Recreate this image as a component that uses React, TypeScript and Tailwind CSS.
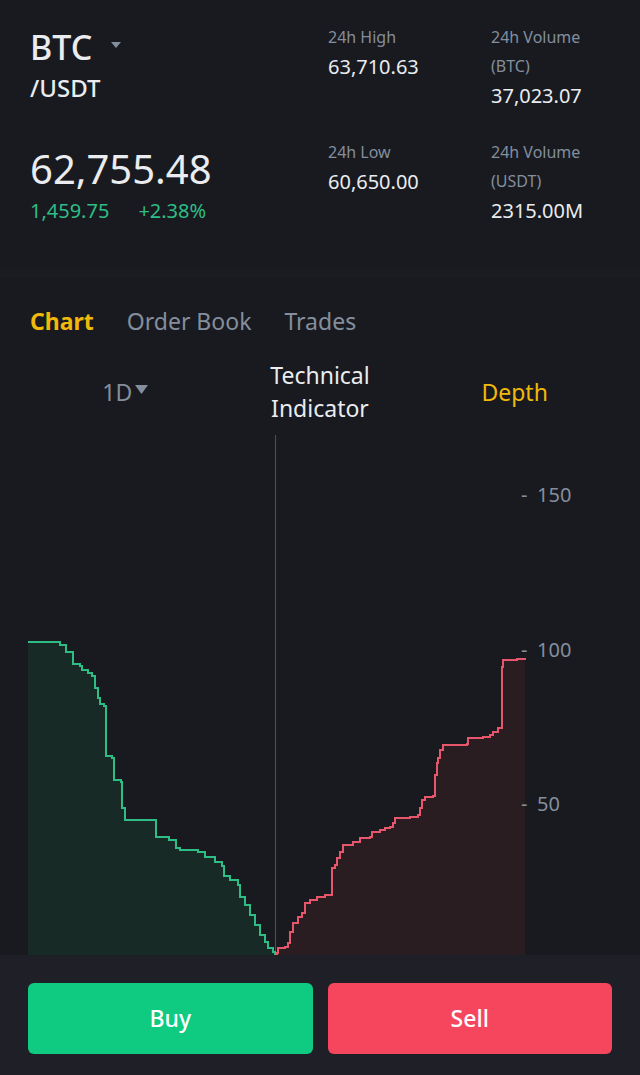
import React from 'react';

const BIDS: [number, number][] = [
    [28, 642], [60, 642], [60, 645], [66, 648], [66, 652], [73, 656], [73, 664], [80, 666], [82, 670],
    [88, 673], [92, 676], [95, 688], [98, 698], [100, 704], [104, 706], [106, 712], [106, 756],
    [112, 758], [114, 780], [121, 782], [122, 808], [125, 820], [156, 821], [156, 837], [169, 840],
    [176, 848], [180, 850], [198, 852], [205, 857], [215, 862], [222, 866], [224, 876], [230, 880],
    [238, 885], [240, 897], [245, 905], [250, 915], [255, 925], [260, 935], [265, 942], [268, 948],
    [273, 952], [275, 955],
];

const ASKS: [number, number][] = [
    [276, 955], [277, 953], [278, 948], [285, 947], [288, 943], [290, 932], [293, 923], [298, 917],
    [302, 913], [305, 903], [310, 900], [317, 897], [325, 895], [332, 893], [332, 868], [335, 865],
    [337, 858], [340, 852], [343, 845], [353, 842], [360, 838], [370, 837], [372, 832], [380, 830],
    [385, 828], [390, 827], [393, 823], [395, 818], [410, 817], [418, 815], [420, 808], [422, 800],
    [425, 797], [433, 796], [435, 775], [437, 763], [438, 758], [440, 750], [443, 745], [467, 744],
    [468, 738], [483, 737], [490, 735], [493, 732], [498, 728], [502, 727], [502, 667], [503, 660],
    [517, 659], [525, 658],
];

// step line: horizontal then vertical between points
const stepPath = (pts: [number, number][]) =>
    pts.map(([x, y], i) => (i === 0 ? `M${x} ${y}` : `H${x} V${y}`)).join(' ');

const Stat = ({ label, value }: { label: string[]; value: string }) => (
    <div className="h-[115px]">
        {label.map(l => (
            <div key={l} className="text-[16px] leading-[29px] text-[#848e9c]">{l}</div>
        ))}
        <div className="text-[20px] leading-[29px] text-[#eaecef]">{value}</div>
    </div>
);

const DepthChart = () => {
    const bidLine = stepPath(BIDS);
    const askLine = stepPath(ASKS);
    return (
        <svg width="640" height="530" viewBox="0 425 640 530" className="block">
            <path d={`${bidLine} V955 H28 Z`} fill="#172a26" />
            <path d={`${askLine} V955 H276 Z`} fill="#2a1d22" />
            <line x1="275.5" y1="435" x2="275.5" y2="955" stroke="#4a505c" strokeWidth="1" />
            <path d={bidLine} fill="none" stroke="#2ebd85" strokeWidth="2" />
            <path d={askLine} fill="none" stroke="#e8566b" strokeWidth="2" />
            {[
                { y: 494, v: '150' },
                { y: 649, v: '100' },
                { y: 803, v: '50' },
            ].map(t => (
                <g key={t.v} fill="#848e9c" fontSize="20" fontFamily="Noto Sans, sans-serif">
                    <text x="521" y={t.y} dominantBaseline="central">-</text>
                    <text x="537" y={t.y} dominantBaseline="central">{t.v}</text>
                </g>
            ))}
        </svg>
    );
};

export default function App() {
    return (
        <div className="w-[640px] h-[1075px] bg-[#181a20] font-['Noto_Sans',sans-serif] overflow-hidden">
            {/* header */}
            <div className="h-[268px] flex pl-[30px]">
                <div className="w-[298px]">
                    <div className="mt-[27px] h-[40px] flex items-center text-[34px] font-medium text-[#eaecef]">
                        BTC
                        <svg width="12" height="8" viewBox="0 0 12 8" className="ml-[18px] mt-[-4px]">
                            <path d="M1 1 H11 L6 7 Z" fill="#848e9c" />
                        </svg>
                    </div>
                    <div className="mt-[6px] text-[24px] leading-[30px] font-medium text-[#eaecef]">/USDT</div>
                    <div className="mt-[42px] text-[40px] leading-[48px] text-[#eaecef]">62,755.48</div>
                    <div className="mt-[4px] flex gap-[29px] text-[20px] leading-[28px] text-[#2ebd85]">
                        <span>1,459.75</span>
                        <span>+2.38%</span>
                    </div>
                </div>
                <div className="w-[163px] pt-[23px]">
                    <Stat label={['24h High']} value="63,710.63" />
                    <Stat label={['24h Low']} value="60,650.00" />
                </div>
                <div className="flex-1 pt-[23px]">
                    <Stat label={['24h Volume', '(BTC)']} value="37,023.07" />
                    <Stat label={['24h Volume', '(USDT)']} value="2315.00M" />
                </div>
            </div>
            <div className="h-[10px] bg-[#1a1c22]" />

            {/* tabs */}
            <div className="pt-[27px] px-[30px] flex gap-[33px] text-[23px] leading-[32px]">
                <span className="font-bold text-[#f0b90b]">Chart</span>
                <span className="text-[#848e9c]">Order Book</span>
                <span className="text-[#848e9c]">Trades</span>
            </div>

            {/* chart controls */}
            <div className="mt-[22px] mx-[28px] grid grid-cols-3 items-center text-[23px] leading-[33px]">
                <div className="flex items-center justify-center text-[#848e9c]">
                    1D
                    <svg width="13" height="9" viewBox="0 0 13 9" className="ml-[3px] mt-[-6px]">
                        <path d="M0 0 H13 L6.5 9 Z" fill="#848e9c" />
                    </svg>
                </div>
                <div className="text-center text-[#eaecef]">
                    <div>Technical</div>
                    <div>Indicator</div>
                </div>
                <div className="text-center text-[#f0b90b]">Depth</div>
            </div>

            <DepthChart />

            {/* actions */}
            <div className="h-[120px] bg-[#1f2027] pt-[28px] px-[28px] flex gap-[15px]">
                <button className="flex-1 h-[71px] rounded-[6px] bg-[#0ecb81] text-white text-[23px] font-medium">
                    Buy
                </button>
                <button className="flex-1 h-[71px] rounded-[6px] bg-[#f6465d] text-white text-[23px] font-medium">
                    Sell
                </button>
            </div>
        </div>
    );
}
